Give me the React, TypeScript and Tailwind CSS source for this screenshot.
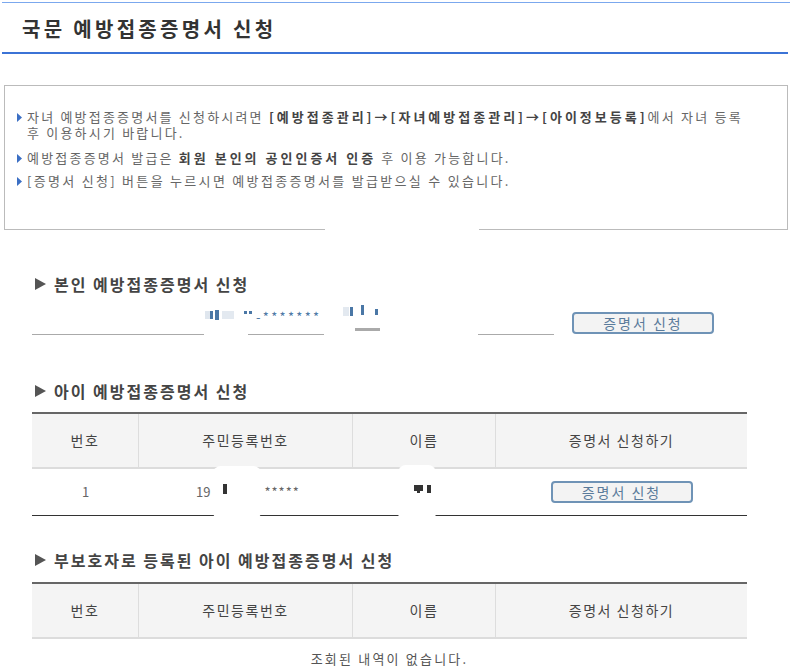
import React from "react";

const font = { fontFamily: '"Noto Sans CJK KR", "Noto Sans", sans-serif' };

function BlueBullet() {
  return (
    <svg width="5" height="9" viewBox="0 0 5 9" className="shrink-0 mt-[4px]">
      <path d="M0 0 L5 4.5 L0 9 Z" fill="#3b6fc4" />
    </svg>
  );
}

function SectionHead({ text, className }: { text: string; className: string }) {
  return (
    <div className={`flex items-center h-[20px] pl-[35px] gap-[8px] ${className}`}>
      <svg width="11" height="12" viewBox="0 0 11 12">
        <path d="M0 0 L11 6 L0 12 Z" fill="#555" />
      </svg>
      <span className="text-[16px] font-bold text-[#444] leading-[20px] tracking-[2px] whitespace-nowrap">{text}</span>
    </div>
  );
}

function CertButton() {
  return (
    <div className="w-[142px] h-[22px] rounded-[4px] border-2 border-[#6f93b6] bg-[#f3f3f3] flex items-center justify-center text-[14px] text-[#5a7b9b] leading-none tracking-[2px]">
      증명서 신청
    </div>
  );
}

function HeaderRow() {
  const cell = "flex items-center justify-center text-[14px] text-[#444] tracking-[1.5px]";
  return (
    <div className="flex h-[55px] bg-[#f4f4f4] border-b-2 border-[#dcdcdc]">
      <div className={`${cell} w-[107px] border-r border-[#ddd]`}>번호</div>
      <div className={`${cell} w-[214px] border-r border-[#ddd]`}>주민등록번호</div>
      <div className={`${cell} w-[143px] border-r border-[#ddd]`}>이름</div>
      <div className={`${cell} flex-1`}>증명서 신청하기</div>
    </div>
  );
}

export default function App() {
  return (
    <div className="w-[800px] h-[670px] bg-white overflow-hidden relative pt-[2px]" style={font}>
      <div className="h-px ml-[2px] w-[788px] bg-[#7ba8ee]" />
      <div className="h-[49px] flex items-center pl-[22px] pt-[3px] text-[20px] font-bold text-[#333] tracking-[3.3px]">
        국문 예방접종증명서 신청
      </div>
      <div className="h-[2px] ml-[2px] w-[786px] bg-[#3b73d6]" />

      {/* info box */}
      <div className="relative mt-[31px] ml-[4px] w-[784px] h-[145px] border border-[#bbb] pt-[23px] pl-[12px] text-[13px] text-[#666] leading-[16px] tracking-[2.2px] whitespace-nowrap">
        <div className="flex gap-[5px]">
          <BlueBullet />
          <div className="flex flex-col">
            <span>
              자녀 예방접종증명서를 신청하시려면{" "}
              <b className="text-[#444] tracking-[3px]">[예방접종관리]→[자녀예방접종관리]→[아이정보등록]</b>에서 자녀 등록
            </span>
            <span>후 이용하시기 바랍니다.</span>
          </div>
        </div>
        <div className="flex gap-[5px] mt-[9px]">
          <BlueBullet />
          <div>
            예방접종증명서 발급은 <b className="text-[#444] tracking-[3px]">회원 본인의 공인인증서 인증</b> 후 이용 가능합니다.
          </div>
        </div>
        <div className="flex gap-[5px] mt-[7px]">
          <BlueBullet />
          <div className="tracking-[2.3px]">[증명서 신청] 버튼을 누르시면 예방접종증명서를 발급받으실 수 있습니다.</div>
        </div>
        <div className="absolute left-[320px] top-[140px] w-[154px] h-[6px] bg-white" />
      </div>

      <SectionHead text="본인 예방접종증명서 신청" className="mt-[44px]" />

      {/* self row */}
      <div className="relative flex h-[46px] ml-[32px]">
        <div className="w-[172px] h-[41px] border-b border-[#aaa]" />
        <div className="w-[44px]" />
        <div className="w-[76px] h-[41px] border-b border-[#aaa] flex items-start pt-[17px] pl-[8px] text-[13px] leading-[12px] text-[#4d79a6] tracking-[2.3px] whitespace-nowrap">
          -*******
        </div>
        <div className="w-[154px]" />
        <div className="w-[76px] h-[41px] border-b border-[#aaa]" />
        <div className="ml-[18px] mt-[18px]">
          <CertButton />
        </div>
        {/* redaction noise */}
        <div className="absolute left-[173px] top-[17px] w-[5px] h-[8px] bg-[#dfe6ee]" />
        <div className="absolute left-[178px] top-[17px] w-[3px] h-[8px] bg-[#4a77a6]" />
        <div className="absolute left-[183px] top-[16px] w-[4px] h-[10px] bg-[#4a77a6]" />
        <div className="absolute left-[190px] top-[17px] w-[12px] h-[8px] bg-[#e3e9f0]" />
        <div className="absolute left-[212px] top-[17px] w-[3px] h-[3px] bg-[#4a77a6]" />
        <div className="absolute left-[217px] top-[17px] w-[3px] h-[3px] bg-[#4a77a6]" />
        <div className="absolute left-[311px] top-[13px] w-[6px] h-[9px] bg-[#e3e9f0]" />
        <div className="absolute left-[318px] top-[13px] w-[3px] h-[9px] bg-[#4a77a6]" />
        <div className="absolute left-[329px] top-[11px] w-[3px] h-[10px] bg-[#4a77a6]" />
        <div className="absolute left-[343px] top-[15px] w-[3px] h-[6px] bg-[#4a77a6]" />
        <div className="absolute left-[323px] top-[34px] w-[25px] h-[3px] bg-[#aaa]" />
      </div>

      <SectionHead text="아이 예방접종증명서 신청" className="mt-[41px]" />

      <div className="relative ml-[32px] w-[715px] mt-[11px] border-t-2 border-[#666]">
        <HeaderRow />
        <div className="flex h-[47px] border-b border-[#333] text-[13px] text-[#666]">
          <div className="w-[107px] flex items-center justify-center">1</div>
          <div className="w-[214px] flex items-center pl-[57px]">
            <span>19</span>
            <span className="ml-[54px] tracking-[1px]">*****</span>
          </div>
          <div className="w-[143px]" />
          <div className="flex-1 flex items-center justify-center">
            <CertButton />
          </div>
        </div>
        {/* redaction blobs */}
        <div className="absolute left-[181px] top-[52px] w-[48px] h-[54px] rounded-[8px] bg-white">
          <div className="absolute left-[10px] top-[18px] w-[4px] h-[10px] bg-[#333]" />
        </div>
        <div className="absolute left-[366px] top-[51px] w-[38px] h-[56px] rounded-[8px] bg-white">
          <div className="absolute left-[16px] top-[20px] w-[9px] h-[6px] bg-[#333]" />
          <div className="absolute left-[19px] top-[26px] w-[3px] h-[2px] bg-[#333]" />
          <div className="absolute left-[29px] top-[20px] w-[4px] h-[8px] bg-[#333]" />
        </div>
      </div>

      <SectionHead text="부보호자로 등록된 아이 예방접종증명서 신청" className="mt-[34px]" />

      <div className="ml-[32px] w-[715px] mt-[12px] border-t-2 border-[#666]">
        <HeaderRow />
        <div className="h-[40px] flex items-center justify-center text-[13px] text-[#555] tracking-[2.2px]">
          조회된 내역이 없습니다.
        </div>
      </div>
    </div>
  );
}
